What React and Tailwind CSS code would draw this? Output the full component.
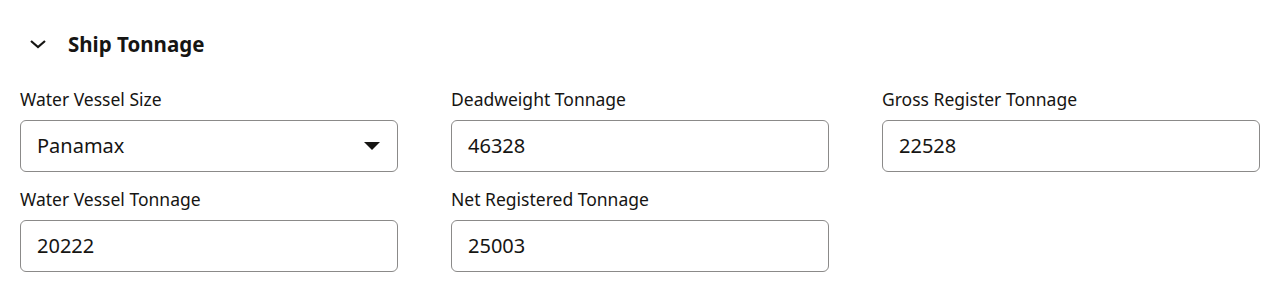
const fields = [
  { label: "Water Vessel Size", value: "Panamax", select: true },
  { label: "Deadweight Tonnage", value: "46328" },
  { label: "Gross Register Tonnage", value: "22528" },
  { label: "Water Vessel Tonnage", value: "20222" },
  { label: "Net Registered Tonnage", value: "25003" },
]

const Field = ({ field }) => {
  return (
    <div className="flex flex-col">
      <label className="text-[17.5px] leading-[22px] text-[#161513] mb-[10px]">{field.label}</label>
      <div className="h-[52px] border border-[#8b8a89] rounded-[6px] flex items-center justify-between pl-[16px] pr-[17px] bg-white">
        <span className="text-[20px] text-[#161513]">{field.value}</span>
        {field.select && (
          <svg width="16" height="8" viewBox="0 0 16 8">
            <path d="M0 0 H16 L8 8 Z" fill="#161513" />
          </svg>
        )}
      </div>
    </div>
  )
}

const App = () => {
  return (
    <div
      className="w-[1278px] h-[297px] bg-white pl-[20px] pr-[18px] pt-[30px]"
      style={{ fontFamily: '"Noto Sans", "Open Sans", sans-serif' }}
    >
      <div className="flex items-center h-[28px] mb-[30px]">
        <div className="w-[48px] flex pl-[9px]">
          <svg width="18" height="10" viewBox="0 0 18 10">
            <path d="M2 2 L9 8 L16 2" fill="none" stroke="#161513" strokeWidth="2.2" />
          </svg>
        </div>
        <h2 className="text-[20.5px] font-bold text-[#161513]">Ship Tonnage</h2>
      </div>
      <div className="grid grid-cols-3 gap-x-[53px] gap-y-[16px]">
        {fields.map((f) => (
          <Field key={f.label} field={f} />
        ))}
      </div>
    </div>
  )
}

export default App
